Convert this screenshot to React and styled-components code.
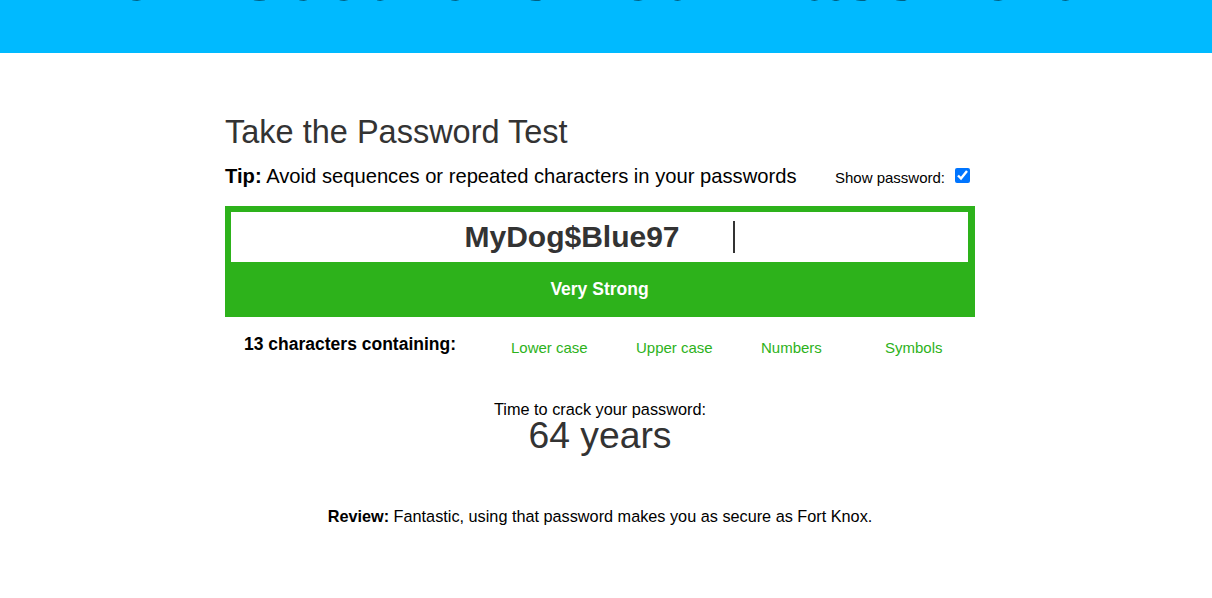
import React from 'react'
import styled, { createGlobalStyle } from 'styled-components'

const GlobalStyle = createGlobalStyle`
  html, body {
    margin: 0;
    padding: 0;
    background: #fff;
    font-family: 'Liberation Sans', Arial, sans-serif;
  }
`

const colors = {
  header: '#00baff',
  green: '#2db21b',
  dark: '#333333',
}

const Header = styled.header`
  height: 53px;
  overflow: hidden;
  background: ${colors.header};
`

const HeaderTitle = styled.h1`
  margin: -61px 0 0;
  padding-right: 12px;
  font-size: 72px;
  line-height: 72px;
  font-weight: 700;
  color: #000;
  text-align: center;
  white-space: nowrap;
`

const Main = styled.main`
  padding-right: 12px;
`

const Container = styled.div`
  width: 750px;
  margin: 0 auto;
  display: flex;
  flex-direction: column;
`

const Title = styled.h2`
  margin: 61px 0 0;
  font-size: 32.5px;
  line-height: 37px;
  font-weight: 400;
  color: ${colors.dark};
`

const TipRow = styled.div`
  display: flex;
  justify-content: space-between;
  align-items: baseline;
  margin-top: 14px;
`

const Tip = styled.p`
  margin: 0;
  font-size: 20.2px;
  line-height: 23px;
  color: #000;

  strong {
    font-weight: 700;
  }
`

const ShowLabel = styled.label`
  display: inline-flex;
  align-items: baseline;
  margin-right: 5px;
  font-size: 15px;
  line-height: 17px;
  color: #000;
`

const Checkbox = styled.input`
  width: 15px;
  height: 15px;
  margin: 0 0 0 10px;
`

const Meter = styled.div`
  margin-top: 18px;
  background: ${colors.green};
  padding: 6px 7px 0 6px;
`

const Field = styled.div`
  height: 50px;
  background: #fff;
  display: flex;
  align-items: center;
  justify-content: center;
`

const Password = styled.span`
  font-size: 30px;
  line-height: 34px;
  font-weight: 700;
  color: ${colors.dark};
`

const Caret = styled.span`
  width: 2px;
  height: 32px;
  margin-left: 53px;
  background: ${colors.dark};
`

const Strength = styled.div`
  height: 55px;
  display: flex;
  align-items: center;
  justify-content: center;
  font-size: 17.5px;
  font-weight: 700;
  color: #fff;
`

const Stats = styled.div`
  display: grid;
  grid-template-columns: 286px 125px 125px 124px 1fr;
  align-items: start;
  margin-top: 17px;
`

const StatsLabel = styled.div`
  padding-left: 19px;
  font-size: 17.5px;
  line-height: 20px;
  font-weight: 700;
  color: #000;
`

const Check = styled.div`
  padding-top: 5px;
  font-size: 15px;
  line-height: 17px;
  color: ${(p) => (p.$met ? colors.green : '#c0392b')};
`

const Crack = styled.div`
  margin-top: 45px;
  display: flex;
  flex-direction: column;
  align-items: center;
`

const CrackLabel = styled.div`
  font-size: 16.3px;
  line-height: 16px;
  color: #000;
`

const CrackTime = styled.div`
  font-size: 37.3px;
  line-height: 36px;
  color: ${colors.dark};
`

const Review = styled.p`
  margin: 54px 0 40px;
  font-size: 16.25px;
  line-height: 18px;
  text-align: center;
  color: #000;

  strong {
    font-weight: 700;
  }
`

const checks = [
  { label: 'Lower case', met: true },
  { label: 'Upper case', met: true },
  { label: 'Numbers', met: true },
  { label: 'Symbols', met: true },
]

const App = () => {
  const password = 'MyDog$Blue97'

  return (
    <>
      <GlobalStyle />
      <Header>
        <HeaderTitle>How Secure is Your Password?</HeaderTitle>
      </Header>
      <Main>
        <Container>
          <Title>Take the Password Test</Title>
          <TipRow>
            <Tip>
              <strong>Tip:</strong> Avoid sequences or repeated characters in your passwords
            </Tip>
            <ShowLabel>
              Show password:
              <Checkbox type="checkbox" checked readOnly />
            </ShowLabel>
          </TipRow>
          <Meter>
            <Field>
              <Password>{password}</Password>
              <Caret />
            </Field>
            <Strength>Very Strong</Strength>
          </Meter>
          <Stats>
            <StatsLabel>13 characters containing:</StatsLabel>
            {checks.map((c) => (
              <Check key={c.label} $met={c.met}>
                {c.label}
              </Check>
            ))}
          </Stats>
          <Crack>
            <CrackLabel>Time to crack your password:</CrackLabel>
            <CrackTime>64 years</CrackTime>
          </Crack>
          <Review>
            <strong>Review:</strong> Fantastic, using that password makes you as secure as Fort Knox.
          </Review>
        </Container>
      </Main>
    </>
  )
}

export default App
